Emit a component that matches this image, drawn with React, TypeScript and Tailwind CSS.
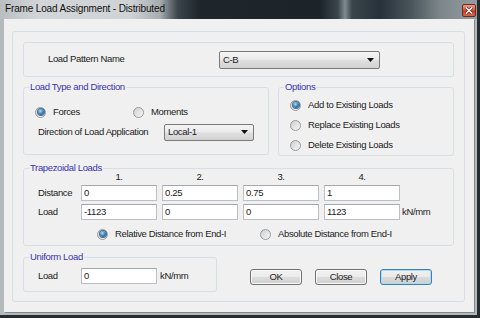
import React from "react";

function Radio({ checked }: { checked?: boolean }) {
  return (
    <span className="flex h-[11px] w-[11px] shrink-0 items-center justify-center rounded-full border border-[#979a9d] bg-[linear-gradient(135deg,#cdcfd1,#f8f8f8)]">
      {checked && (
        <span className="h-[6px] w-[6px] rounded-full bg-[radial-gradient(circle_at_40%_35%,#a6e0fa,#2a6fae_60%,#1b4c80)] shadow-[0_0_0_1px_#50708c]" />
      )}
    </span>
  );
}

function RadioItem({ checked, label, className }: { checked?: boolean; label: string; className?: string }) {
  return (
    <div className={"flex h-[12px] items-center " + (className ?? "")}>
      <Radio checked={checked} />
      <span className="ml-[7px] leading-[12px]">{label}</span>
    </div>
  );
}

function Field({ value }: { value: string }) {
  return (
    <div className="flex h-[16px] w-[76px] shrink-0 items-center border border-[#bcc0c6] border-t-[#a4a8ad] bg-white pl-[2px] leading-[14px]">
      {value}
    </div>
  );
}

function Arrow() {
  return (
    <svg width="7" height="4" viewBox="0 0 7 4">
      <path d="M0 0H7L3.5 4Z" fill="#111" />
    </svg>
  );
}

function Combo({ value, className }: { value: string; className: string }) {
  return (
    <div
      className={
        "flex items-center justify-between rounded-[2px] border border-[#7a7a7a] bg-[linear-gradient(#f4f4f4,#ebebeb_45%,#dedede_55%,#d2d2d2)] pl-[3px] pr-[5px] " +
        className
      }
    >
      <span className="leading-[14px]">{value}</span>
      <Arrow />
    </div>
  );
}

function Btn({ label, def }: { label: string; def?: boolean }) {
  return (
    <div
      className={
        "flex h-[16px] w-[52px] items-center justify-center rounded-[3px] border leading-[14px] " +
        (def
          ? "border-[#3c7fb1] bg-[linear-gradient(#f1f1f1,#e9e9e9_50%,#dbdbdb_51%,#cfcfcf)] shadow-[inset_0_0_0_1px_#a9dcf7]"
          : "border-[#707070] bg-[linear-gradient(#f2f2f2,#ebebeb_50%,#dddddd_51%,#cfcfcf)] shadow-[inset_0_0_0_1px_#fafafa]")
      }
    >
      {label}
    </div>
  );
}

function Legend({ children }: { children: React.ReactNode }) {
  return <legend className="ml-[5px] px-[1px] leading-[12px] text-[#3a32b0]">{children}</legend>;
}

export default function App() {
  return (
    <div className="h-[318px] w-[480px] overflow-hidden bg-[#262d31] font-['Liberation_Sans',Arial,sans-serif] text-[9.5px] tracking-[-0.35px] text-[#1b1b1b]">
      <div className="flex h-[315px] w-[477px] flex-col bg-[#b4b9bc]">
        {/* Title bar */}
        <div className="flex h-[19px] shrink-0 items-start bg-[linear-gradient(90deg,#b9bec1_0px,#d3d6d8_40px,#d0d3d5_130px,#a6acaf_160px,#3a444a_178px,#1e262c_200px,#1c242a_320px,#3b464c_338px,#7f8b90_345px,#3a454b_352px,#27313a_380px,#48545a_410px,#7c868a_440px,#959da0_477px)]">
          <span className="ml-[5px] mt-[3px] text-[10px] leading-[12px] tracking-[-0.15px] text-[#101010]">
            Frame Load Assignment - Distributed
          </span>
          <div className="ml-auto mr-[1px] mt-[4px] flex h-[13px] w-[14px] items-center justify-center rounded-[2px] border border-[#6b2a1e] bg-[linear-gradient(#e8a08f,#d35b41_45%,#c23d22_55%,#d5684b)]">
            <svg width="8" height="7" viewBox="0 0 8 7">
              <path d="M1 0.5L7 6.5M7 0.5L1 6.5" stroke="#5a2a22" strokeWidth="2.6" />
              <path d="M1 0.5L7 6.5M7 0.5L1 6.5" stroke="#ffffff" strokeWidth="1.4" />
            </svg>
          </div>
        </div>

        {/* Body */}
        <div className="flex flex-1 pb-[3px] pl-[4px] pr-[3px]">
          <div className="flex-1 bg-[#f0f0f0] pl-[8px] pt-[12px] shadow-[1px_1px_0_#80868a]">
            <div className="flex h-[271px] w-[453px] flex-col rounded-[3px] border border-[#d5dfe5] px-[10px] pt-[10px]">
              {/* Load Pattern */}
              <div className="flex h-[35px] items-center rounded-[3px] border border-[#d5dfe5] pl-[24px]">
                <span className="w-[171px]">Load Pattern Name</span>
                <Combo value="C-B" className="h-[18px] w-[161px]" />
              </div>

              {/* Load type + Options */}
              <div className="mt-[4px] flex gap-[9px]">
                <fieldset className="h-[74px] w-[246px] rounded-[3px] border border-[#d5dfe5]">
                  <Legend>Load Type and Direction</Legend>
                  <div className="flex pl-[11px] pt-[13px]">
                    <RadioItem checked label="Forces" className="w-[98px]" />
                    <RadioItem label="Moments" />
                  </div>
                  <div className="mt-[6px] flex h-[16px] items-center pl-[14px]">
                    <span className="w-[126px]">Direction of Load Application</span>
                    <Combo value="Local-1" className="h-[17px] w-[90px]" />
                  </div>
                </fieldset>
                <fieldset className="h-[75px] w-[176px] rounded-[3px] border border-[#d5dfe5]">
                  <Legend>Options</Legend>
                  <div className="flex flex-col gap-[8px] pl-[11px] pt-[6px]">
                    <RadioItem checked label="Add to Existing Loads" />
                    <RadioItem label="Replace Existing Loads" />
                    <RadioItem label="Delete Existing Loads" />
                  </div>
                </fieldset>
              </div>

              {/* Trapezoidal */}
              <fieldset className="mt-[6px] h-[84px] w-[431px] rounded-[3px] border border-[#d5dfe5]">
                <Legend>Trapezoidal Loads</Legend>
                <div className="mt-[-2px] flex h-[10px] items-center gap-[5px] pl-[14px] leading-[10px]">
                  <span className="w-[38px]" />
                  <span className="w-[76px] text-center">1.</span>
                  <span className="w-[76px] text-center">2.</span>
                  <span className="w-[76px] text-center">3.</span>
                  <span className="w-[76px] text-center">4.</span>
                </div>
                <div className="mt-[3px] flex items-center gap-[5px] pl-[14px]">
                  <span className="w-[38px]">Distance</span>
                  <Field value="0" />
                  <Field value="0.25" />
                  <Field value="0.75" />
                  <Field value="1" />
                </div>
                <div className="mt-[3px] flex items-center gap-[5px] pl-[14px]">
                  <span className="w-[38px]">Load</span>
                  <Field value="-1123" />
                  <Field value="0" />
                  <Field value="0" />
                  <Field value="1123" />
                  <span className="ml-[-3px]">kN/mm</span>
                </div>
                <div className="mt-[8px] flex pl-[73px]">
                  <RadioItem checked label="Relative Distance from End-I" className="w-[163px]" />
                  <RadioItem label="Absolute Distance from End-I" />
                </div>
              </fieldset>

              {/* Uniform + buttons */}
              <div className="mt-[5px] flex items-start">
                <fieldset className="h-[41px] w-[194px] rounded-[3px] border border-[#d5dfe5]">
                  <Legend>Uniform Load</Legend>
                  <div className="mt-[5px] flex items-center pl-[14px]">
                    <span className="w-[43px]">Load</span>
                    <Field value="0" />
                    <span className="ml-[3px]">kN/mm</span>
                  </div>
                </fieldset>
                <div className="ml-[33px] mt-[18px] flex gap-[13px]">
                  <Btn label="OK" />
                  <Btn label="Close" />
                  <Btn label="Apply" def />
                </div>
              </div>
            </div>
          </div>
        </div>
      </div>
    </div>
  );
}
